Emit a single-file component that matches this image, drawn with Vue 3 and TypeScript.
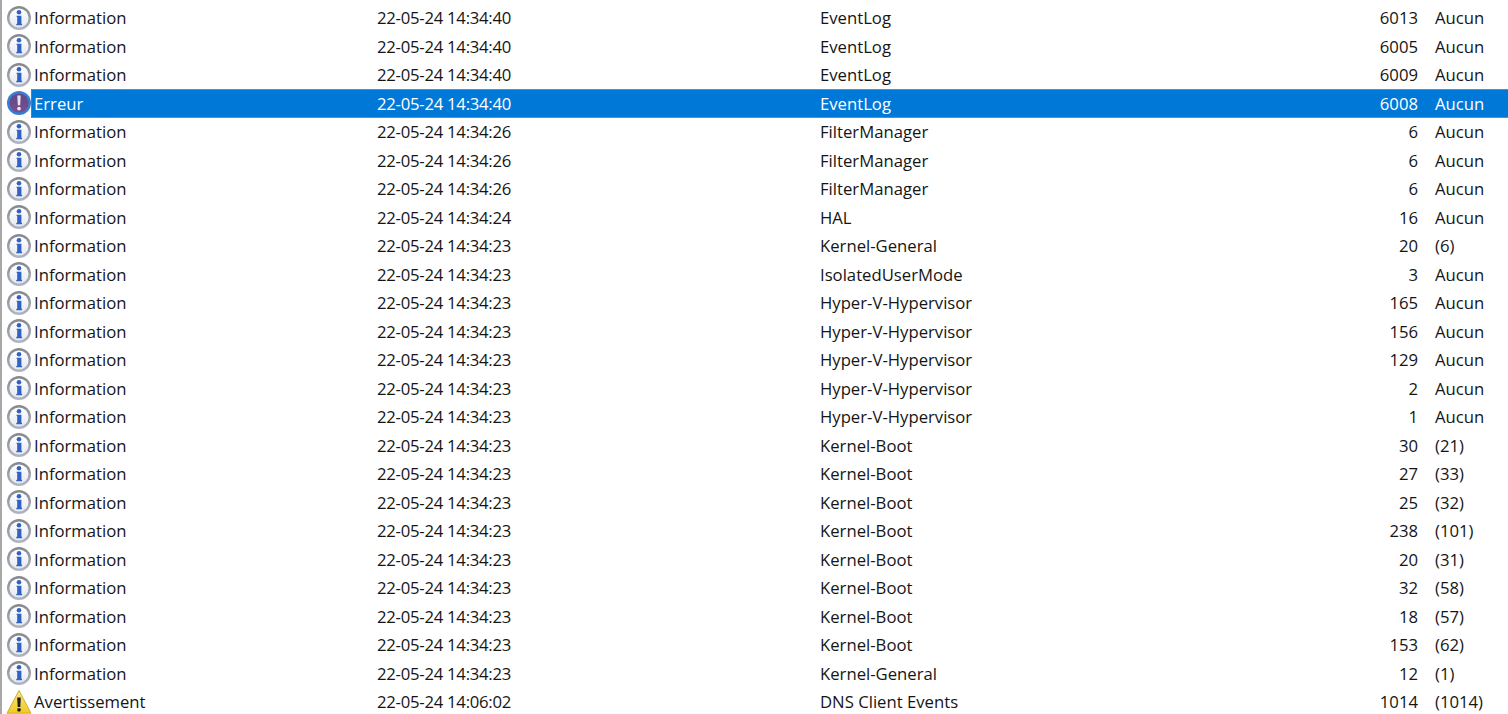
<script setup lang="ts">
type Level = 'info' | 'error' | 'warn'
interface Row { level: Level; label: string; date: string; source: string; id: number; task: string }
const info = (date: string, source: string, id: number, task: string): Row =>
  ({ level: 'info', label: 'Information', date: '22-05-24 ' + date, source, id, task })
const rows: Row[] = [
  info('14:34:40', 'EventLog', 6013, 'Aucun'),
  info('14:34:40', 'EventLog', 6005, 'Aucun'),
  info('14:34:40', 'EventLog', 6009, 'Aucun'),
  { level: 'error', label: 'Erreur', date: '22-05-24 14:34:40', source: 'EventLog', id: 6008, task: 'Aucun' },
  info('14:34:26', 'FilterManager', 6, 'Aucun'),
  info('14:34:26', 'FilterManager', 6, 'Aucun'),
  info('14:34:26', 'FilterManager', 6, 'Aucun'),
  info('14:34:24', 'HAL', 16, 'Aucun'),
  info('14:34:23', 'Kernel-General', 20, '(6)'),
  info('14:34:23', 'IsolatedUserMode', 3, 'Aucun'),
  info('14:34:23', 'Hyper-V-Hypervisor', 165, 'Aucun'),
  info('14:34:23', 'Hyper-V-Hypervisor', 156, 'Aucun'),
  info('14:34:23', 'Hyper-V-Hypervisor', 129, 'Aucun'),
  info('14:34:23', 'Hyper-V-Hypervisor', 2, 'Aucun'),
  info('14:34:23', 'Hyper-V-Hypervisor', 1, 'Aucun'),
  info('14:34:23', 'Kernel-Boot', 30, '(21)'),
  info('14:34:23', 'Kernel-Boot', 27, '(33)'),
  info('14:34:23', 'Kernel-Boot', 25, '(32)'),
  info('14:34:23', 'Kernel-Boot', 238, '(101)'),
  info('14:34:23', 'Kernel-Boot', 20, '(31)'),
  info('14:34:23', 'Kernel-Boot', 32, '(58)'),
  info('14:34:23', 'Kernel-Boot', 18, '(57)'),
  info('14:34:23', 'Kernel-Boot', 153, '(62)'),
  info('14:34:23', 'Kernel-General', 12, '(1)'),
  { level: 'warn', label: 'Avertissement', date: '22-05-24 14:06:02', source: 'DNS Client Events', id: 1014, task: '(1014)' },
]
</script>

<template>
  <div class="list">
    <div v-for="(r, i) in rows" :key="i" class="row">
      <span class="ico">
        <svg v-if="r.level === 'warn'" viewBox="0 0 26 26" width="26" height="26">
          <defs>
            <linearGradient :id="'w' + i" x1="0" y1="0" x2="0" y2="1">
              <stop offset="0" stop-color="#fbe785"/>
              <stop offset="1" stop-color="#f1c91c"/>
            </linearGradient>
          </defs>
          <path d="M13 1.5 25 24.2H1Z" :fill="`url(#w${i})`" stroke="#c9ad3a" stroke-width="1" stroke-linejoin="round"/>
          <path d="M11.2 8.5h3.6l-.5 9.5h-2.6Z" fill="#1c1c1c"/>
          <rect x="11.3" y="19.2" width="3.4" height="3.2" rx=".8" fill="#1c1c1c"/>
        </svg>
        <svg v-else viewBox="0 0 26 26" width="26" height="26">
          <defs>
            <linearGradient :id="'g' + i" x1="0" y1="0" x2="0" y2="1">
              <stop offset="0" :stop-color="r.level === 'error' ? '#3f7fcb' : '#85878c'"/>
              <stop offset="1" :stop-color="r.level === 'error' ? '#2f7fd6' : '#b2b6c2'"/>
            </linearGradient>
            <linearGradient :id="'f' + i" x1="0" y1="0" x2="0" y2="1">
              <stop offset="0" :stop-color="r.level === 'error' ? '#5d4a8c' : '#ffffff'"/>
              <stop offset="1" :stop-color="r.level === 'error' ? '#7c4c88' : '#e6e9f0'"/>
            </linearGradient>
          </defs>
          <circle cx="13" cy="13" r="12" :fill="`url(#g${i})`"/>
          <circle cx="13" cy="13" r="9.6" :fill="`url(#f${i})`"/>
          <template v-if="r.level === 'info'">
            <circle cx="13" cy="7.2" r="2.3" fill="#2f62c4"/>
            <path d="M10.6 10.8h4.8v7.8l.7.6v1.1H10.2v-1.1l1-.6v-6.4l-.6-.4Z" fill="#2f62c4"/>
          </template>
          <template v-else>
            <path d="M11.3 5.5h3.4l-.5 9.8h-2.4Z" fill="#e9dff0"/>
            <circle cx="13" cy="18.6" r="1.9" fill="#e9dff0"/>
          </template>
        </svg>
      </span>
      <div class="cells" :class="{ selected: r.level === 'error' }">
        <span>{{ r.label }}</span>
        <span class="date">{{ r.date }}</span>
        <span>{{ r.source }}</span>
        <span class="num">{{ r.id }}</span>
        <span>{{ r.task }}</span>
      </div>
    </div>
  </div>
</template>

<style>
html, body { margin: 0; background: #fff; overflow: hidden; }
</style>

<style scoped>
.list {
  width: 1508px;
  height: 714px;
  box-sizing: border-box;
  padding-top: 4px;
  border-left: 2px solid #a8a8a8;
  background: #fff;
  overflow: hidden;
  font-family: "Open Sans", "Noto Sans", sans-serif;
  font-size: 16.7px;
  color: #151515;
}
.row {
  display: flex;
  align-items: center;
  height: 28.5px;
}
.ico {
  width: 29px;
  flex: none;
  display: flex;
  justify-content: center;
  margin-left: 2px;
  margin-right: -2px;
  position: relative;
  top: -0.5px;
}
.ico svg { display: block; }
.cells {
  flex: 1;
  height: 100%;
  box-sizing: border-box;
  display: grid;
  grid-template-columns: 343px 443px 1fr 90px 73px;
  align-items: center;
  padding-left: 3px;
  padding-bottom: 1px;
  white-space: nowrap;
}
.date { letter-spacing: -0.25px; }
.num { text-align: right; padding-right: 17px; }
.selected {
  background: #0078d7;
  color: #fff;
  margin-top: -1px;
  height: calc(100% + 1px);
  border-top: 1px solid #7d8790;
  border-bottom: 1px solid #7d8790;
  border-left: 1px solid #6f7780;
  padding-left: 2px;
  padding-bottom: 0;
}
</style>
